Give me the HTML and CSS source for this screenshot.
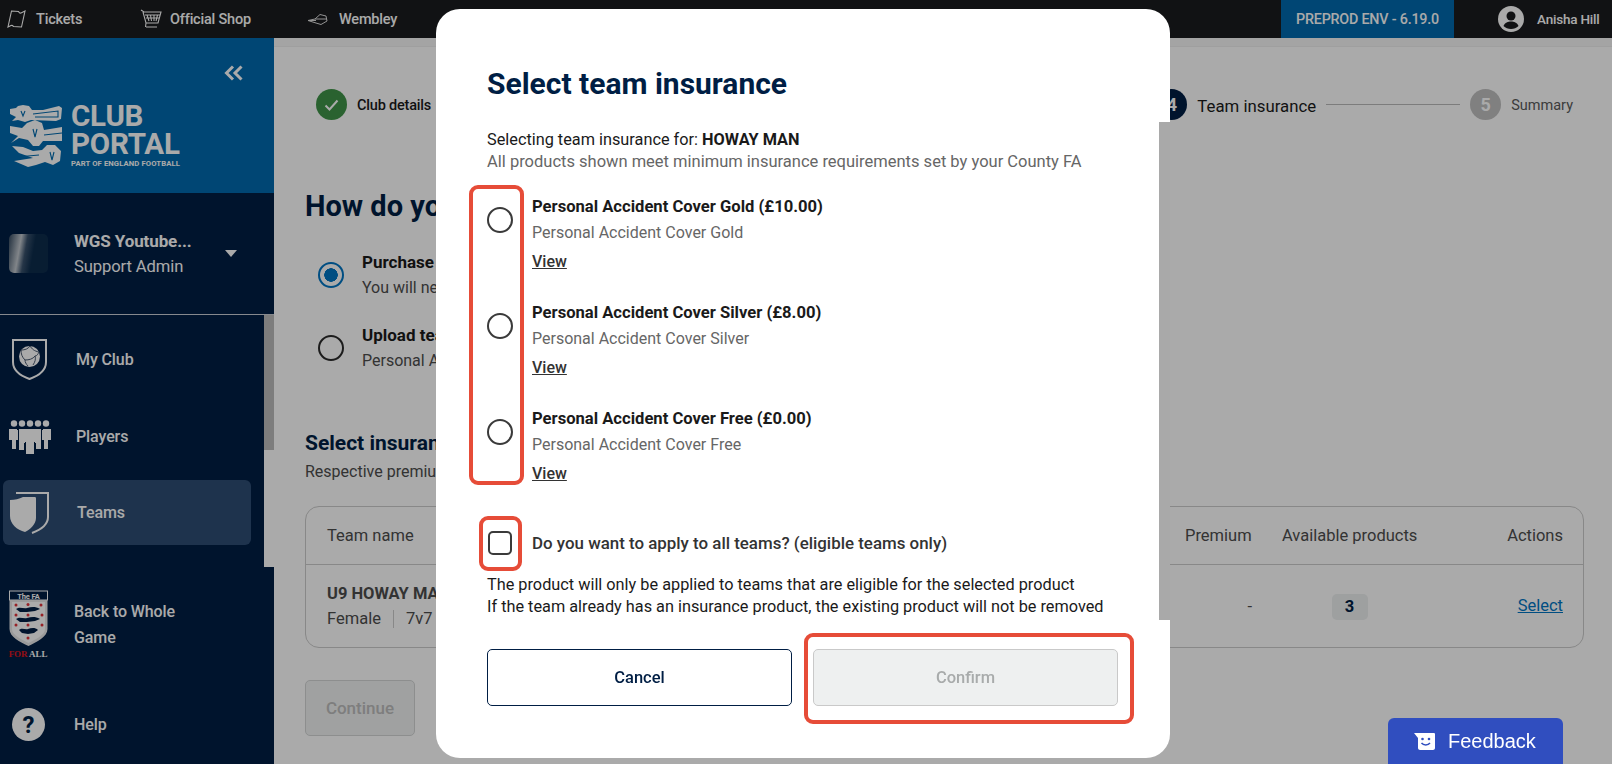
FILE: index.html
```html
<!DOCTYPE html>
<html lang="en">
<head>
<meta charset="utf-8">
<title>Select team insurance</title>
<link rel="stylesheet" href="styles.css">
</head>
<body>
<header class="topbar">
  <a class="top-link tickets">
    <svg class="top-icon" width="19" height="18" viewBox="0 0 19 18" fill="none" stroke="#fff" stroke-width="1.100"><path d="M4.500 1L11.500 1.500Q12.500 3.500 14 3L18 1 14.500 17 6.500 16.500Q5.500 15 4 15.500L1 17z"/></svg>
    <span>Tickets</span>
  </a>
  <a class="top-link shop">
    <svg class="top-icon" width="22" height="20" viewBox="0 0 22 20" fill="none" stroke="#fff" stroke-width="1.100"><path d="M1 1L4 3H21L18 14H6L3 3M6 18H17M6 14L5.500 18M7 6l2 6M10.500 6l1 6M14 6v6M17.500 6l-1.500 6M5 6H20M6 9H19"/></svg>
    <span>Official Shop</span>
  </a>
  <a class="top-link wembley">
    <svg class="top-icon" width="22" height="14" viewBox="0 0 22 14" fill="none" stroke="#fff" stroke-width="1" opacity=".85"><path d="M1 8.500L8 7 13 2.500 19 4 20 9 14 12.500 9 11zM8 7H20M1 8.500H9"/></svg>
    <span>Wembley</span>
  </a>
  <div class="env">PREPROD ENV - 6.19.0</div>
  <div class="account">
    <svg width="26" height="26" viewBox="0 0 26 26"><circle cx="13" cy="13" r="13" fill="#fff"/><circle cx="13" cy="10" r="4.500" fill="#1a1b1e"/><path d="M5.500 20c1.500-3.500 4.500-4.500 7.500-4.500s6 1 7.500 4.500c-2 2-4.500 3-7.500 3s-5.500-1-7.500-3z" fill="#1a1b1e"/></svg>
    <span>Anisha Hill</span>
  </div>
</header>

<div class="shell">
  <aside class="sidebar">
    <div class="brand">
      <div class="collapse">
        <svg width="19" height="16" viewBox="0 0 19 16" fill="none" stroke="#fff" stroke-width="3"><path d="M9 1.500L2.500 8 9 14.500M17.500 1.500L11 8l6.500 6.500"/></svg>
      </div>
      <div class="logo">
        <svg class="lions" width="53" height="62" viewBox="0 0 53 62" fill="#fff">
          <path d="M1 4L7 3 9 1 14 0 20 1 23 5 34 5 50 1 53 3 52 14 47 16 22 15 16 17 9 15 3 16 7 12 1 9z"/>
          <path d="M1 21L13 23 18 18 26 15 33 18 35 25 53 22V36L34 36 30 41 24 41 19 35 10 33 2 38 9 31 1 28z"/>
          <path d="M3 41L14 42 24 46 33 45 38 40 46 40 52 46 51 56 44 60 36 57 27 60 19 62 12 59 5 56 24 53 10 48z"/>
          <path d="M24 9L49 6V12L26 12M12 6l2 5 2-5M24 24l2 8 2-8M41 47l2 8 2-8M35 30L53 28M8 52L30 50" fill="none" stroke="#006aae" stroke-width="1.100"/>
        </svg>
        <div class="logo-text">
          <div class="logo-main">CLUB<br>PORTAL</div>
          <div class="logo-sub">PART OF ENGLAND FOOTBALL</div>
        </div>
      </div>
    </div>
    <div class="club">
      <div class="club-badge"></div>
      <div class="club-text">
        <div class="club-name">WGS Youtube...</div>
        <div class="club-role">Support Admin</div>
      </div>
      <div class="caret"></div>
    </div>
    <nav class="nav">
      <div class="scroll-track"><div class="scroll-thumb"></div></div>
      <a class="nav-item myclub">
        <svg class="nav-icon" width="35" height="41" viewBox="0 0 35 41"><path d="M1 1h33v22c0 9-8 14-16.500 17C9 37 1 32 1 23z" fill="none" stroke="#fff" stroke-width="2"/><circle cx="17.500" cy="17.500" r="10.500" fill="#fff"/><path d="M9 11c4 0 7-1 9-4M18 7c2 3 4 5 9 6M9 11c0 4 1 7 4 10M13 21c4 0 8-1 10-4M23 17c2 0 3-2 4-4M13 21c0 2 1 4 3 6M23 17c1 3 0 6-2 9" stroke="#4a5a70" stroke-width="1" fill="none"/></svg>
        <span>My Club</span>
      </a>
      <a class="nav-item players">
        <svg class="nav-icon" width="42" height="34" viewBox="0 0 42 34" fill="#fff">
          <circle cx="5" cy="3.500" r="3.200"/><circle cx="13" cy="3.500" r="3.200"/><circle cx="21" cy="3.500" r="3.200"/><circle cx="29" cy="3.500" r="3.200"/><circle cx="37" cy="3.500" r="3.200"/>
          <path d="M0 9h8v1h1v10H7v9H3V20H0zM10 9h5v1h1v13h-1v7h-5zM15 9h12v13h-2v12h-8V22h-2zM27 9h5v20h-5v-6h-1V10h1zM34 9h8v11h-3v9h-4V20h-2V10h1z"/>
        </svg>
        <span>Players</span>
      </a>
      <a class="nav-item teams">
        <svg class="nav-icon" width="39" height="42" viewBox="0 0 39 42"><path d="M6 1h32v24c0 8-8 13-16 16" fill="none" stroke="#fff" stroke-width="2"/><path d="M0 8c5 0 9-1 13-3h12c1 0 1 1 1 2v19c0 6-6 12-11 14C7 38 0 32 0 24z" fill="#fff"/></svg>
        <span>Teams</span>
      </a>
      <a class="nav-item wholegame">
        <svg class="nav-icon crest" width="39" height="68" viewBox="0 0 39 68">
          <rect x=".5" y="1" width="38" height="9" fill="#001e44" stroke="#fff"/>
          <text x="19.500" y="8.500" class="crest-fa">The FA</text>
          <path d="M.5 10h38v29c0 8-11 13-19 17C11 52 .5 47 .5 39z" fill="#e8e8e8"/>
          <path d="M3 12h33v27c0 6-9 10-16.500 14C12 49 3 45 3 39z" fill="#fff"/>
          <path d="M7 19c4-3 7 0 11-1s8-2 13 1l-5 2-8 1-7 0zM7 29c4-3 7 0 11-1s8-2 13 1l-5 2-8 1-7 0zM10 40c3-3 6 0 9-1s7-2 10 1l-4 3-6 1-6-1z" fill="#001e44"/>
          <g fill="#e2333b"><circle cx="7" cy="15" r="1.500"/><circle cx="19" cy="14.500" r="1.500"/><circle cx="32" cy="15" r="1.500"/><circle cx="7" cy="25" r="1.500"/><circle cx="19" cy="25" r="1.500"/><circle cx="33" cy="25" r="1.500"/><circle cx="7" cy="35" r="1.500"/><circle cx="19" cy="35" r="1.500"/><circle cx="33" cy="35" r="1.500"/><circle cx="19" cy="48" r="1.500"/></g>
          <text x="19" y="67" class="crest-all"><tspan fill="#e0141c">FOR</tspan> ALL</text>
        </svg>
        <span class="wrap-label">Back to Whole<br>Game</span>
      </a>
      <a class="nav-item help">
        <svg class="nav-icon" width="33" height="33" viewBox="0 0 33 33"><circle cx="16.500" cy="16.500" r="16.500" fill="#fff"/><text x="16.500" y="25" class="help-mark">?</text></svg>
        <span>Help</span>
      </a>
    </nav>
  </aside>

  <main class="main">
    <div class="strip"></div>
    <div class="stepper">
      <div class="step">
        <span class="dot done"><svg width="15" height="12" viewBox="0 0 15 12" fill="none" stroke="#fff" stroke-width="2"><path d="M1.500 6.500L5.500 10.500 13.500 1.500"/></svg></span>
        <span class="step-label small">Club details</span>
      </div>
      <div class="step-gap"></div>
      <div class="step">
        <span class="dot current">4</span>
        <span class="step-label strong">Team insurance</span>
      </div>
      <div class="step-line"></div>
      <div class="step">
        <span class="dot next">5</span>
        <span class="step-label small muted">Summary</span>
      </div>
    </div>

    <h1 class="page-title">How do you want</h1>

    <div class="choice">
      <span class="big-radio on"></span>
      <div class="choice-text"><div class="choice-title">Purchase team</div><div class="choice-sub">You will need to</div></div>
    </div>
    <div class="choice second">
      <span class="big-radio"></span>
      <div class="choice-text"><div class="choice-title">Upload team</div><div class="choice-sub">Personal Accident</div></div>
    </div>

    <h2 class="section-title">Select insurance</h2>
    <p class="section-sub">Respective premiums</p>

    <div class="table">
      <div class="table-row head">
        <div>Team name</div><div>Premium</div><div class="center">Available products</div><div class="right">Actions</div>
      </div>
      <div class="table-row body">
        <div><div class="team-name">U9 HOWAY MAN</div><div class="team-meta">Female <i class="pipe"></i> 7v7</div></div>
        <div class="dash">-</div>
        <div class="center"><span class="count">3</span></div>
        <div class="right"><a class="select-link">Select</a></div>
      </div>
    </div>

    <button class="continue" type="button">Continue</button>
  </main>
</div>

<div class="modal-layer">
  <section class="modal">
    <div class="modal-head"><h2 class="modal-title">Select team insurance</h2></div>
    <div class="modal-body">
      <p class="lead">Selecting team insurance for: <b>HOWAY MAN</b></p>
      <p class="lead-sub">All products shown meet minimum insurance requirements set by your County FA</p>

      <div class="option">
        <span class="radio"></span>
        <div>
          <div class="opt-title">Personal Accident Cover Gold (£10.00)</div>
          <div class="opt-desc">Personal Accident Cover Gold</div>
          <a class="opt-view">View</a>
        </div>
      </div>
      <div class="option">
        <span class="radio"></span>
        <div>
          <div class="opt-title">Personal Accident Cover Silver (£8.00)</div>
          <div class="opt-desc">Personal Accident Cover Silver</div>
          <a class="opt-view">View</a>
        </div>
      </div>
      <div class="option">
        <span class="radio"></span>
        <div>
          <div class="opt-title">Personal Accident Cover Free (£0.00)</div>
          <div class="opt-desc">Personal Accident Cover Free</div>
          <a class="opt-view">View</a>
        </div>
      </div>

      <div class="apply">
        <span class="checkbox"></span>
        <span class="apply-label">Do you want to apply to all teams? (eligible teams only)</span>
      </div>
      <p class="note first">The product will only be applied to teams that are eligible for the selected product</p>
      <p class="note">If the team already has an insurance product, the existing product will not be removed</p>
    </div>
    <div class="modal-foot">
      <button class="btn cancel" type="button">Cancel</button>
      <button class="btn confirm" type="button">Confirm</button>
    </div>
    <div class="mark mark-radios"></div>
    <div class="mark mark-check"></div>
    <div class="mark mark-confirm"></div>
  </section>
</div>

<div class="feedback">
  <svg width="21" height="18" viewBox="0 0 21 18"><path d="M0 1h20c1 0 1 1 1 1v14c0 1-1 2-2 2H6c-1 0-2-1-2-2V6z" fill="#fff"/><circle cx="8.500" cy="7" r="1.300" fill="#304ebf"/><circle cx="15" cy="7" r="1.300" fill="#304ebf"/><path d="M7.500 11c2 2.500 6.500 2.500 8.500 0" fill="none" stroke="#304ebf" stroke-width="1.500"/></svg>
  <span>Feedback</span>
</div>
</body>
</html>
```
FILE: styles.css
```css
* { box-sizing: border-box; }
html, body { margin: 0; height: 100%; }
body {
  width: 1612px;
  height: 764px;
  overflow: hidden;
  font-family: Roboto, "Liberation Sans", sans-serif;
  background: #fff;
  color: #1a1a1a;
}
p, h1, h2 { margin: 0; }
button { font-family: inherit; }

/* top bar */
.topbar {
  height: 38px;
  background: #1a1b1e;
  display: flex;
  align-items: center;
  color: #fff;
  font-size: 14.5px;
  font-weight: 500;
  letter-spacing: -.2px;
}
.top-link { display: flex; align-items: center; }
.top-icon { flex: none; }
.tickets { margin-left: 7px; gap: 10px; width: 133px; }
.shop { gap: 8px; width: 167px; }
.wembley { gap: 10px; }
.env {
  margin-left: auto;
  width: 173px;
  height: 38px;
  background: #006aae;
  display: flex;
  align-items: center;
  justify-content: center;
  font-size: 14.3px;
  font-weight: 500;
}
.account { display: flex; align-items: center; gap: 13px; width: 158px; padding-left: 44px; white-space: nowrap; font-size: 13.5px; }
.account svg { flex: none; }

/* shell */
.shell { display: flex; height: 726px; }

/* sidebar */
.sidebar { width: 274px; flex: none; background: #001e44; color: #fff; display: flex; flex-direction: column; }
.brand { height: 155px; background: #006aae; position: relative; padding: 67px 0 0 9px; }
.collapse { position: absolute; top: 27px; left: 224px; line-height: 0; }
.logo { display: flex; gap: 9px; }
.lions { flex: none; }
.logo-text { margin-top: -3px; }
.logo-main { font-size: 29.500px; font-weight: 700; line-height: 28px; letter-spacing: -.2px; }
.logo-sub { font-size: 7.700px; font-weight: 700; line-height: 12px; letter-spacing: .1px; white-space: nowrap; }

.club { height: 122px; display: flex; align-items: center; padding-left: 9px; border-bottom: 1px solid #c9ced6; }
.club-badge {
  width: 39px; height: 39px; border-radius: 5px; flex: none;
  background: linear-gradient(100deg, #33485e 0%, #c2c8ce 28%, #38506b 42%, #0c2c4c 60%);
}
.club-text { margin-left: 26px; width: 151px; line-height: 26px; letter-spacing: -.1px; }
.club-name { font-size: 17px; font-weight: 700; white-space: nowrap; }
.club-role { font-size: 16.600px; }
.caret { width: 0; height: 0; border-left: 6.500px solid transparent; border-right: 6.500px solid transparent; border-top: 7px solid #fff; }

.nav { flex: 1; position: relative; display: flex; flex-direction: column; font-size: 16px; letter-spacing: -.1px; }
.scroll-track { position: absolute; top: 0; right: 0; width: 10px; height: 252px; background: #fff; }
.scroll-thumb { height: 135px; background: #bcbcbc; }
.nav-item { display: flex; align-items: center; }
.myclub { height: 41px; margin-top: 24px; padding-left: 12px; gap: 29px; font-weight: 500; }
.players { height: 34px; margin-top: 40px; padding-left: 9px; gap: 25px; font-weight: 500; }
.players span { margin-top: -2px; }
.teams { height: 65px; margin: 26px 0 0 3px; width: 248px; padding-left: 7px; gap: 28px; background: #2e4d74; border-radius: 6px; font-weight: 500; }
.wholegame { height: 68px; margin-top: 45px; padding-left: 9px; gap: 26px; font-weight: 500; }
.wrap-label { line-height: 26px; margin-top: 2px; }
.help { height: 33px; margin-top: 50px; padding-left: 12px; gap: 29px; font-weight: 500; }
.crest-fa { font: 700 7.500px Roboto, sans-serif; fill: #fff; text-anchor: middle; }
.crest-all { font: 700 9px "Liberation Serif", serif; fill: #fff; text-anchor: middle; }
.help-mark { font: 700 24px Roboto, sans-serif; fill: #001e44; text-anchor: middle; }

/* main */
.main { flex: 1; padding: 0 28px 0 31px; position: relative; min-width: 0; }
.strip { height: 9px; margin: 0 -28px 0 -31px; background: #f6f6f6; border-bottom: 1px solid #efefef; }
.stepper { display: flex; align-items: center; height: 31px; margin: 42px 11px 0 11px; }
.step { display: flex; align-items: center; gap: 10px; }
.dot { width: 31px; height: 31px; border-radius: 50%; display: flex; align-items: center; justify-content: center; font-size: 18px; font-weight: 700; color: #fff; flex: none; }
.done { background: #3f9448; }
.current { background: #001e44; }
.next { background: #c0c0c0; }
.step-gap { flex: 1; }
.step-line { width: 134px; height: 1px; background: #bbb; margin: 0 10px; }
.step-label { position: relative; top: 1px; }
.step-label.small { font-size: 14.5px; font-weight: 500; letter-spacing: -.2px; }
.step-label.strong { font-size: 16.800px; font-weight: 400; }
.step-label.muted { color: #5a5a5a; letter-spacing: 0; font-weight: 400; }

.page-title { font-size: 29px; line-height: 36px; margin-top: 68px; font-weight: 700; color: #001e44; white-space: nowrap; }
.choice { display: flex; align-items: center; height: 52px; margin-top: 25px; gap: 18px; padding-left: 13px; line-height: 26px; white-space: nowrap; }
.choice.second { margin-top: 21px; }
.choice-title { font-size: 17px; font-weight: 700; }
.choice-sub { font-size: 16px; color: #4d4d4d; }
.big-radio { width: 26px; height: 26px; border-radius: 50%; border: 2.500px solid #2b2b2b; flex: none; position: relative; }
.big-radio.on { border-color: #0075c4; background: radial-gradient(circle, #0075c4 0 6.500px, #fff 7px); }
.section-title { font-size: 21px; line-height: 28px; margin-top: 55px; font-weight: 700; color: #001e44; white-space: nowrap; }
.section-sub { font-size: 16px; line-height: 22px; margin-top: 4px; color: #4d4d4d; white-space: nowrap; }

.table { margin-top: 23px; height: 142px; border: 1px solid #ccc; border-radius: 14px; }
.table-row { display: grid; grid-template-columns: 1fr 97px 135px 146px; padding: 0 20px 0 21px; align-items: center; font-size: 16.500px; color: #4d4d4d; }
.table-row.head { height: 58px; border-bottom: 1px solid #ccc; }
.table-row.body { height: 83px; }
.center { text-align: center; white-space: nowrap; }
.right { text-align: right; }
.team-name { font-weight: 700; line-height: 26px; margin-top: -2px; }
.team-meta { line-height: 24px; display: flex; align-items: center; gap: 12px; }
.pipe { width: 1px; height: 18px; background: #ccc; }
.dash { text-align: right; padding-right: 30px; }
.count { display: inline-block; width: 36px; height: 26px; line-height: 26px; border-radius: 5px; background: #eef0f0; color: #001e44; font-weight: 700; }
.select-link { display: block; margin-top: -2px; color: #0075c4; text-decoration: underline; }
.continue { display: block; margin-top: 32px; width: 110px; height: 56px; border: 1px solid #d4d6d6; border-radius: 5px; background: #f0f2f2; color: #bdbdbd; font-size: 17px; font-weight: 500; }

/* modal */
.modal-layer { position: fixed; inset: 0; background: rgba(0, 0, 0, .333); padding: 9px 0 6px 436px; }
.modal { position: relative; width: 734px; height: 749px; background: #fff; border-radius: 24px; display: flex; flex-direction: column; color: #1a1a1a; }
.modal-head { height: 113px; padding: 57px 0 0 51px; flex: none; }
.modal-title { font-size: 30px; line-height: 36px; font-weight: 700; color: #001e44; }
.modal-body { height: 498px; flex: none; padding: 7px 0 0 51px; border-right: 11px solid #a9a9a9; overflow: hidden; }
.lead, .lead-sub, .note { line-height: 22px; white-space: nowrap; }
.lead { font-size: 16.300px; }
.lead b { font-weight: 700; }
.lead-sub { font-size: 16.500px; color: #666; }
.note { font-size: 16.300px; }
.option { display: flex; height: 106px; }
.lead-sub + .option { margin-top: 20px; }
.radio { width: 26px; height: 26px; margin: 14px 19px 0 0; border: 2.500px solid #3a3a3a; border-radius: 50%; flex: none; }
.opt-title { font-size: 16.600px; font-weight: 700; line-height: 27px; white-space: nowrap; }
.opt-desc { font-size: 16px; line-height: 26px; color: #666; }
.opt-view { display: block; margin-top: 3px; font-size: 16px; line-height: 26px; text-decoration: underline; color: #333; font-weight: 500; }
.apply { display: flex; align-items: center; height: 26px; margin-top: 19px; }
.checkbox { width: 24px; height: 24px; margin-left: 1px; margin-right: 20px; border: 2.500px solid #3a3a3a; border-radius: 5px; flex: none; }
.apply-label { font-size: 16.900px; font-weight: 500; color: #333; white-space: nowrap; }
.note.first { margin-top: 18px; }
.modal-foot { flex: 1; display: flex; gap: 21px; padding: 29px 0 0 51px; }
.btn { width: 305px; height: 57px; border-radius: 5px; font-size: 16.500px; font-weight: 500; }
.cancel { background: #fff; border: 1px solid #001e44; color: #001e44; }
.confirm { background: #eef0f0; border: 1px solid #c9c9c9; color: #a8abab; }

.mark { position: absolute; border: 4px solid #e64c38; border-radius: 9px; pointer-events: none; }
.mark-radios { left: 33px; top: 176px; width: 55px; height: 300px; }
.mark-check { left: 43px; top: 507px; width: 43px; height: 55px; }
.mark-confirm { left: 368px; top: 624px; width: 330px; height: 91px; }

/* feedback */
.feedback {
  position: fixed; left: 1388px; top: 718px; width: 175px; height: 46px;
  background: #304ebf; border-radius: 6px 6px 0 0; color: #fff;
  display: flex; align-items: center; gap: 13px; padding-left: 26px;
  font: 20px "Liberation Sans", Arial, sans-serif;
}
```
